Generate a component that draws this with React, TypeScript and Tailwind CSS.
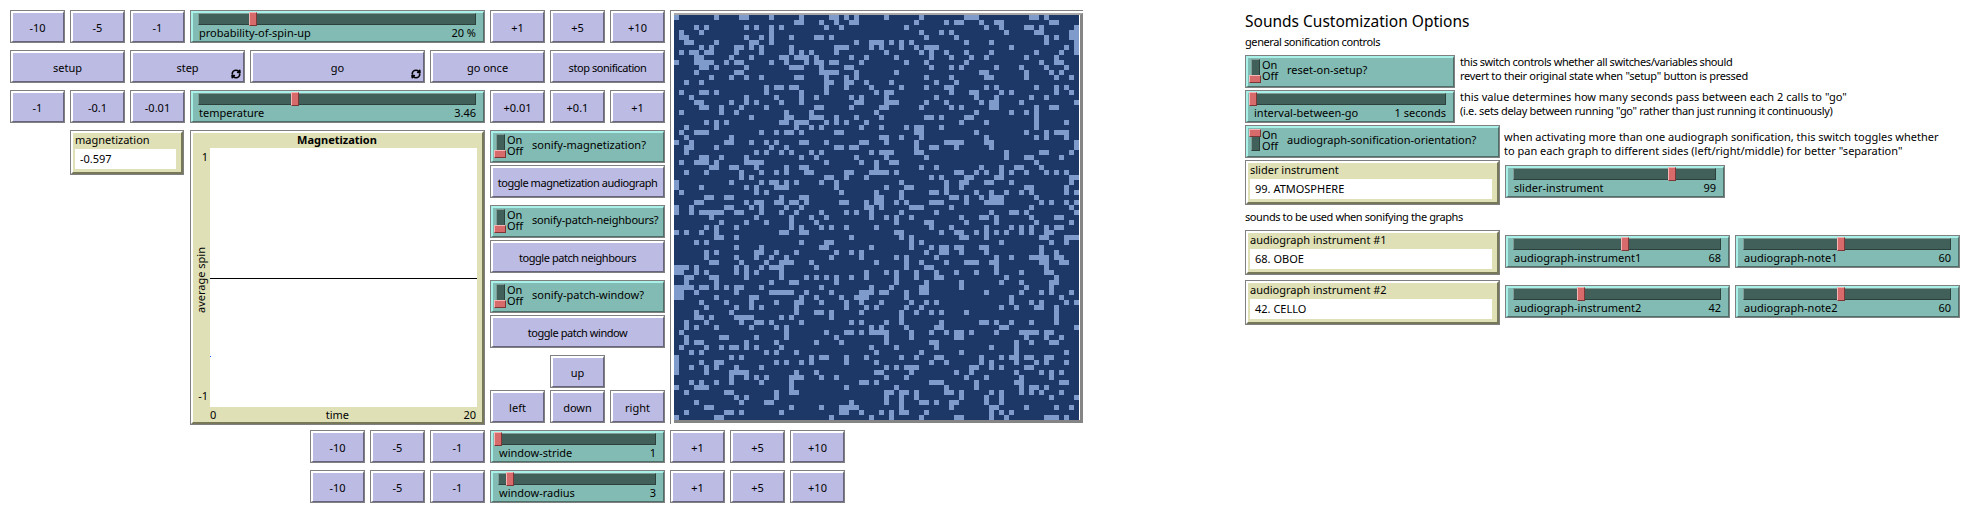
import { RefreshCw } from "lucide-react";

const viewRows = [
  "0 8 13 14 19 25 31 32 34 36 42 49 58 59 60 71 72 74",
  "24 25 29 32 35 36 48 54 56 57 61 64 65 75 76",
  "4 6 14 16 19 21 30 33 46 62 65 70 71 73 80",
  "1 5 19 49 53 55 66 72 73 79 80",
  "1 2 14 17 19 23 28 29 31 50 56 74 76 79 80",
  "2 3 8 15 16 19 36 39 40 41 43 45 47 58 63 74 80",
  "5 7 12 13 15 17 23 32 33 34 39 41 45 48 50 51 52 67 78 80",
  "1 3 4 6 7 12 17 23 25 27 32 42 49 51 54 58 63 72 77 80",
  "4 5 11 15 21 22 24 25 26 28 35 38 44 51 55 59 62 70 76",
  "0 4 5 6 7 10 12 13 19 22 26 28 29 31 32 37 46 50 58 73 76 77",
  "5 6 8 14 23 24 25 29 34 35 51 55 57 64 69 74 78",
  "4 12 13 29 30 31 32 36 44 61 62 70 75 77",
  "7 11 14 17 24 25 30 34 36 50 55 62 63 70 76 79",
  "2 5 30 31 34 35 38 43 52 56",
  "18 20 21 23 24 30 34 39 45 50 54 55 62 64 72 76 78",
  "1 5 6 8 18 25 30 40 42 43 55 59 60 65 67 76 79",
  "3 14 20 25 28 35 37 42 52 60 64 71 74",
  "4 5 11 14 16 21 25 36 37 42 43 44 50 54 61 63 64 69 80",
  "5 6 9 13 18 28 29 35 41 42 49 55 57 63 64 72 75 76",
  "1 9 12 22 27 40 60 67 70 72",
  "15 22 23 27 28 29 32 36 41 50 51 53 58 59 72",
  "6 8 10 21 22 24 25 26 30 32 34 38 57 62 72 78",
  "2 8 24 27 29 37 41 46 48 49 53 72",
  "1 4 5 6 17 20 22 23 25 32 33 48 49 60 70 74 76 77 78",
  "2 11 41 42 45 49 62 72 74 78",
  "0 3 10 11 15 18 20 25 26 30 37 38 42 48 54 55 56 57 62 63 80",
  "2 3 8 19 22 32 33 35 36 48 51 52 56 63 80",
  "2 16 18 21 23 27 29 39 41 42 43 48 49 66 73 74 79",
  "5 6 9 14 25 28 36 42 50 66 70 71 77",
  "1 4 5 6 8 14 15 16 17 30 37 40 43 44 72",
  "7 8 11 12 16 22 25 26 40 49 52 61 65 68 69 73",
  "2 6 13 17 20 22 26 27 34 35 39 40 41 42 44 56 57 60 62 65 67 70 74 76 78",
  "13 15 30 31 34 38 51 53 58 59 64 65 79 80",
  "0 11 17 19 20 22 24 29 32 45 54 57 58 62 63 67 79",
  "0 5 14 16 20 21 22 32 42 46 47 54 57 70 71 78",
  "1 16 18 33 40 45 51 52 54 60 63 66 69 71 78 80",
  "6 7 10 11 21 25 26 40 41 45 55 56 58 61 63 64 65 72",
  "4 5 14 16 17 20 21 23 24 26 33 34 38 40 41 44 46 51 52 53 58 62 63 64 65 73 75 78 80",
  "0 3 10 11 15 17 22 25 38 39 41 47 48 49 55 71 79",
  "0 3 5 6 7 8 9 12 13 17 21 24 29 34 36 39 45 52 63 67 68 70 80",
  "7 16 23 27 30 39 42 44 47 57 61 62 64 71 76 77",
  "9 14 18 23 28 44 50 51 58 64 72 79",
  "6 8 12 23 25 29 31 34 40 51 55 62 67 69 71 74 76 77",
  "0 2 5 8 21 22 25 26 44 45 53 56 57 60 62 64 66 69 71 74 75",
  "8 9 12 35 45 47 57 58 62 73 74 78 79 80",
  "4 6 25 30 31 47 49 65 75 78",
  "12 17 29 30 39 47 51 53 54 56 57 61 62 73",
  "6 8 16 17 20 24 32 35 37 50 53 54 57 62 73 76",
  "6 12 16 19 22 31 37 44 46 52 64 67 71 72 73 74 76 77",
  "7 8 13 18 21 22 23 27 40 46 49 54 58 59 60 63 64 73 74 77 78",
  "0 1 2 4 12 14 17 19 20 21 28 46 50 51 64 74",
  "0 1 4 6 12 14 16 21 38 42 44 48 52 56 60 64 69 74 75",
  "2 3 7 8 14 21 26 28 30 32 35 38 44 48 52 53 66 76",
  "2 8 19 23 24 32 44 50 57 65 69 75 76",
  "0 1 2 3 5 6 8 10 12 13 17 29 39 43 49 50 57 70 75",
  "0 1 4 12 19 20 21 22 23 26 31 37 38 39 41 42 46 49 50 62 69 73 75 79",
  "0 1 8 15 16 25 28 33 36 37 38 46 67 77",
  "5 10 15 20 24 25 29 34 37 41 47 50 52 67 71 73 78 80",
  "6 12 15 17 24 34 38 40 46 49 65 68 72 73 76",
  "4 11 24 28 29 31 37 45 48 51 53 58 76",
  "4 5 7 12 13 14 15 21 23 31 45 76",
  "2 6 13 16 17 19 25 35 37 42 45 53 61 62 64 67 71 76",
  "2 4 8 15 20 22 39 41 46 52 53 65 66 80",
  "1 22 30 34 35 37 39 40 41 42 47 51 54 56 57 59 64 69 70 71 72 74 75",
  "2 9 10 16 22 32 42 47 56 57 70 74 77",
  "2 4 5 14 20 28 33 42 51 52 68 71 75 76",
  "1 6 9 11 12 14 16 21 39 44 52 63 68",
  "3 5 18 20 24 40 49 57 68 78",
  "0 11 13 27 29 30 34 38 45 48 52 53 61 65 67 68 70 71 74 75",
  "0 5 8 9 20 22 25 27 34 40 51 54 61 63 68 72 74 78",
  "0 3 6 8 12 17 42 44 46 47 48 59 60 63 65 70 71",
  "0 6 11 12 13 14 24 28 40 41 47 56 59 68 73 75 77",
  "11 14 16 18 23 24 25 29 32 42 46 58 62 69 75",
  "3 5 8 11 17 23 37 38 40 51 52 53 60 68 69 77 78",
  "0 4 5 6 23 34 44 54 60 69 71 72 74",
  "2 10 11 20 23 24 42 43 45 46 48 54 55 57 63 65 69 71 73 77",
  "12 14 20 42 45 48 57 62 65 75 80",
  "4 13 18 19 35 42 45 49 50 52 55 56 62 65",
  "6 7 23 29 33 34 35 36 45 55 63 64 70 76 79",
  "2 10 11 13 21 33 34 37 41 43 45 46 50 63 65 67",
  "0 8 9 31 39 43 49 56 57 63 66 74 75 76 78",
].map((r) => r.split(" ").map(Number));

function Button({ label, w = "w-[55px]", loop, tight }: { label: string; w?: string; loop?: boolean; tight?: boolean }) {
  return (
    <div className={`${w} relative h-[33px] shrink-0 border border-[#808080]`}>
      <div
        className={`flex h-full items-center justify-center whitespace-nowrap border-t-2 border-l-2 border-r border-b border-t-white border-l-white border-r-[#66647f] border-b-[#66647f] bg-[#bcbbe4] pt-[2px] pr-[1px] text-black ${tight ? "tracking-[-0.45px]" : ""}`}
      >
        {label}
      </div>
      {loop && <RefreshCw size={10} strokeWidth={4} className="absolute right-[3px] bottom-[3px] text-black" />}
    </div>
  );
}

function Slider({ label, value, handle, w }: { label: string; value: string; handle: number; w: string }) {
  return (
    <div className={`${w} relative h-[33px] shrink-0 border border-[#808080]`}>
      <div className="flex h-full flex-col border-t-2 border-l-2 border-r border-b border-t-[#a9f0e8] border-l-[#a9f0e8] border-r-[#4d6f69] border-b-[#4d6f69] bg-[#82bbb3] pl-[5px] pr-[7px]">
        <div className="h-[12px] shrink-0 border-t border-l border-t-[#7f9c97] border-l-[#7f9c97] border-b border-r border-b-[#2c403c] border-r-[#2c403c] bg-[#41605a]" />
        <div className="flex flex-1 items-center justify-between whitespace-nowrap pl-[1px] text-black">
          <span>{label}</span>
          <span>{value}</span>
        </div>
      </div>
      <div
        className="absolute top-[1px] h-[14px] w-[8px] border-t border-l border-b border-r border-t-[#f4b6b6] border-l-[#f4b6b6] border-b-[#7b3636] border-r-[#7b3636] bg-[#d76b6b]"
        style={{ left: handle - 1 }}
      />
    </div>
  );
}

function Switch({ label, w, on, tight }: { label: string; w: string; on?: boolean; tight?: boolean }) {
  return (
    <div className={`${w} h-[33px] shrink-0 border border-[#808080]`}>
      <div className="flex h-full border-t-2 border-l-2 border-r border-b border-t-[#a9f0e8] border-l-[#a9f0e8] border-r-[#4d6f69] border-b-[#4d6f69] bg-[#82bbb3] text-black">
        <div className="relative ml-[1px] mt-[1px] h-[23px] w-[12px] shrink-0">
          <div className="mx-auto h-[22px] w-[9px] border border-[#7f9c97] border-b-[#2c403c] border-r-[#2c403c] bg-[#41605a]" />
          <div
            className={`absolute left-0 h-[8px] w-[12px] border-t border-l border-b border-r border-t-[#f4b6b6] border-l-[#f4b6b6] border-b-[#7b3636] border-r-[#7b3636] bg-[#d76b6b] ${on ? "top-0" : "bottom-[-1px]"}`}
          />
        </div>
        <div className="ml-[1px] flex w-[24px] shrink-0 flex-col leading-[11px]">
          <span className="mt-[1px]">On</span>
          <span>Off</span>
        </div>
        <div className={`flex h-[20px] items-center whitespace-nowrap pl-[1px] pt-[3px] ${tight ? "tracking-[-0.2px]" : ""}`}>{label}</div>
      </div>
    </div>
  );
}

function Monitor({ label, value, w }: { label: string; value: string; w: string }) {
  return (
    <div className={`${w} h-[45px] shrink-0 border border-[#808080]`}>
      <div className="h-full border-t-2 border-l-2 border-r-2 border-b-2 border-t-white border-l-white border-r-[#77775a] border-b-[#77775a] bg-[#dfe0b5] px-[2px] pr-[5px] text-black">
        <div className="h-[16px] leading-[14px]">{label}</div>
        <div className="flex h-[20px] items-center bg-white pl-[5px]">{value}</div>
      </div>
    </div>
  );
}

function Plot() {
  return (
    <div className="h-[295px] w-[295px] shrink-0 border border-[#808080]">
      <div className="flex h-full flex-col border-t-2 border-l-2 border-r-2 border-b-2 border-t-white border-l-white border-r-[#77775a] border-b-[#77775a] bg-[#dfe0b5] text-black">
        <div className="h-[15px] pr-[1px] text-center font-bold leading-[14px]">Magnetization</div>
        <div className="flex h-[261px]">
          <div className="relative w-[17px] shrink-0 text-right">
            <span className="absolute right-[2px] top-[2px]">1</span>
            <span className="absolute right-[2px] bottom-[4px]">-1</span>
            <span className="absolute left-[-27px] top-[125px] w-[70px] -rotate-90 whitespace-nowrap text-center">average spin</span>
          </div>
          <div className="relative flex-1 bg-white">
            <div className="absolute left-0 top-[130px] h-px w-full bg-black" />
            <div className="absolute left-0 top-[208px] h-px w-px bg-blue-600" />
          </div>
          <div className="w-[5px] shrink-0" />
        </div>
        <div className="flex justify-between pl-[17px] pr-[6px] leading-[15px]">
          <span>0</span>
          <span className="pr-[5px]">time</span>
          <span>20</span>
        </div>
      </div>
    </div>
  );
}

function View() {
  return (
    <div className="h-[414px] w-[413px] shrink-0 border-t border-l border-[#808080]">
      <div className="h-full border-t-2 border-l-3 border-white">
        <div className="border-t-2 border-r-3 border-b-3 border-t-[#a8a8a8] border-r-[#858585] border-b-[#858585]">
          <svg width={405} height={405} shapeRendering="crispEdges" className="block bg-[#1d3766]">
            {viewRows.map((cols, r) =>
              cols.map((c) => <rect key={`${r}-${c}`} x={c * 5} y={r * 5} width={5} height={5} fill="#7f9bcc" />)
            )}
          </svg>
        </div>
      </div>
    </div>
  );
}

function StepRow({ minus, slider, plus }: { minus: string[]; slider: React.ReactNode; plus: string[] }) {
  return (
    <div className="flex gap-[5px]">
      {minus.map((m) => (
        <Button key={m} label={m} />
      ))}
      {slider}
      {plus.map((p) => (
        <Button key={p} label={p} />
      ))}
    </div>
  );
}

export default function App() {
  return (
    <div className="flex h-[520px] w-[1977px] bg-white pl-[10px] pt-[10px] font-['Noto_Sans',sans-serif] text-[11px] leading-[14px] text-black">
      <div className="w-[1235px] shrink-0">
        <div className="flex gap-[5px]">
          <div className="flex w-[655px] shrink-0 flex-col gap-[7px]">
            <StepRow
              minus={["-10", "-5", "-1"]}
              slider={<Slider w="w-[295px]" label="probability-of-spin-up" value="20 %" handle={59} />}
              plus={["+1", "+5", "+10"]}
            />
            <div className="flex gap-[5px]">
              <Button label="setup" w="w-[115px]" />
              <Button label="step" w="w-[115px]" loop />
              <Button label="go" w="w-[175px]" loop />
              <Button label="go once" w="w-[115px]" />
              <Button label="stop sonification" w="w-[115px]" tight />
            </div>
            <StepRow
              minus={["-1", "-0.1", "-0.01"]}
              slider={<Slider w="w-[295px]" label="temperature" value="3.46" handle={101} />}
              plus={["+0.01", "+0.1", "+1"]}
            />
            <div className="flex gap-[5px]">
              <div className="ml-[60px] w-[115px] shrink-0">
                <Monitor w="w-[114px]" label="magnetization" value="-0.597" />
              </div>
              <Plot />
              <div className="flex w-[175px] shrink-0 flex-col">
                <Switch w="w-[175px]" label="sonify-magnetization?" />
                <div className="mt-[2px]">
                  <Button w="w-[175px]" label="toggle magnetization audiograph" tight />
                </div>
                <div className="mt-[7px]">
                  <Switch w="w-[175px]" label="sonify-patch-neighbours?" tight />
                </div>
                <div className="mt-[2px]">
                  <Button w="w-[175px]" label="toggle patch neighbours" tight />
                </div>
                <div className="mt-[7px]">
                  <Switch w="w-[175px]" label="sonify-patch-window?" />
                </div>
                <div className="mt-[2px]">
                  <Button w="w-[175px]" label="toggle patch window" tight />
                </div>
                <div className="ml-[60px] mt-[7px]">
                  <Button label="up" />
                </div>
                <div className="mt-[2px] flex gap-[5px]">
                  <Button label="left" />
                  <Button label="down" />
                  <Button label="right" />
                </div>
              </div>
            </div>
          </div>
          <View />
        </div>
        <div className="ml-[300px] mt-[5px] flex flex-col gap-[7px]">
          <StepRow
            minus={["-10", "-5", "-1"]}
            slider={<Slider w="w-[175px]" label="window-stride" value="1" handle={4} />}
            plus={["+1", "+5", "+10"]}
          />
          <StepRow
            minus={["-10", "-5", "-1"]}
            slider={<Slider w="w-[175px]" label="window-radius" value="3" handle={16} />}
            plus={["+1", "+5", "+10"]}
          />
        </div>
      </div>

      <div className="flex flex-col">
        <div className="h-[23px] text-[15.5px] leading-[22px]">Sounds Customization Options</div>
        <div className="mt-[2px] h-[14px] tracking-[-0.4px]">general sonification controls</div>
        <div className="mt-[6px] flex gap-[5px]">
          <Switch w="w-[210px]" label="reset-on-setup?" />
          <p className="whitespace-nowrap">
            <span className="tracking-[-0.4px]">this switch controls whether all switches/variables should</span>
            <br />
            <span className="tracking-[-0.3px]">revert to their original state when "setup" button is pressed</span>
          </p>
        </div>
        <div className="mt-[2px] flex gap-[5px]">
          <Slider w="w-[210px]" label="interval-between-go" value="1 seconds" handle={4} />
          <p className="whitespace-nowrap">
            <span>this value determines how many seconds pass between each 2 calls to "go"</span>
            <br />
            <span className="tracking-[-0.33px]">(i.e. sets delay between running "go" rather than just running it continuously)</span>
          </p>
        </div>
        <div className="mt-[2px] flex gap-[4px]">
          <Switch w="w-[255px]" label="audiograph-sonification-orientation?" on />
          <p className="whitespace-nowrap pt-[5px]">
            when activating more than one audiograph sonification, this switch toggles whether
            <br />
            to pan each graph to different sides (left/right/middle) for better "separation"
          </p>
        </div>
        <div className="mt-[2px] flex gap-[5px]">
          <Monitor w="w-[255px]" label="slider instrument" value="99. ATMOSPHERE" />
          <div className="mt-[5px]">
            <Slider w="w-[220px]" label="slider-instrument" value="99" handle={163} />
          </div>
        </div>
        <div className="mt-[5px] h-[14px] tracking-[-0.4px]">sounds to be used when sonifying the graphs</div>
        <div className="mt-[6px] flex gap-[5px]">
          <Monitor w="w-[255px]" label="audiograph instrument #1" value="68. OBOE" />
          <div className="mt-[5px] flex gap-[5px]">
            <Slider w="w-[225px]" label="audiograph-instrument1" value="68" handle={116} />
            <Slider w="w-[225px]" label="audiograph-note1" value="60" handle={102} />
          </div>
        </div>
        <div className="mt-[5px] flex gap-[5px]">
          <Monitor w="w-[255px]" label="audiograph instrument #2" value="42. CELLO" />
          <div className="mt-[5px] flex gap-[5px]">
            <Slider w="w-[225px]" label="audiograph-instrument2" value="42" handle={72} />
            <Slider w="w-[225px]" label="audiograph-note2" value="60" handle={102} />
          </div>
        </div>
      </div>
    </div>
  );
}
